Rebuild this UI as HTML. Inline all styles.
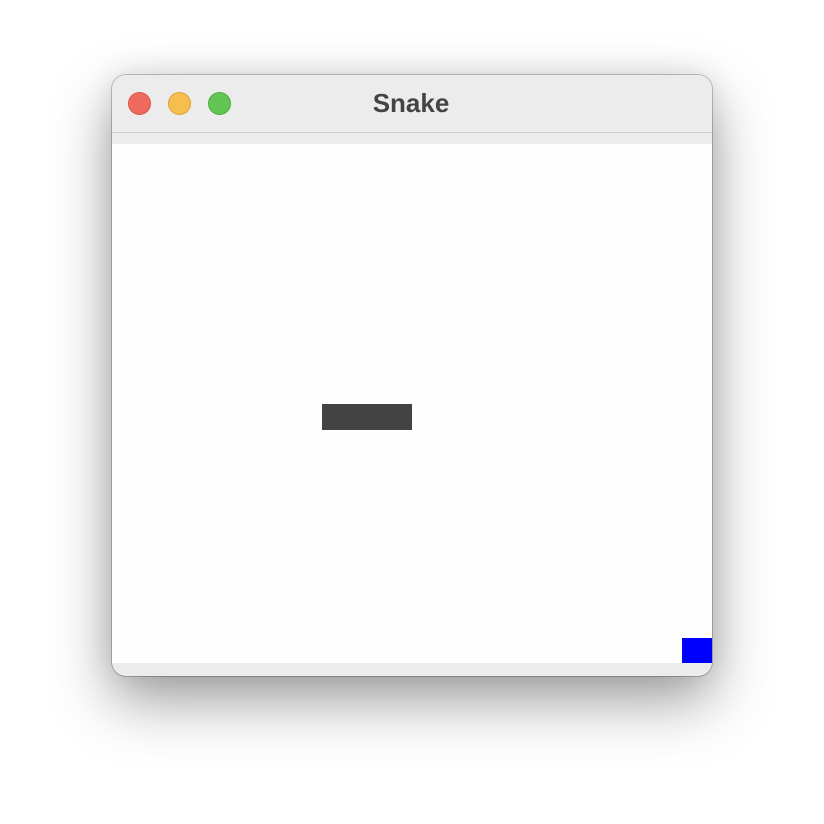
<!DOCTYPE html>
<html><head><meta charset="utf-8"><style>
html,body{margin:0;padding:0;width:824px;height:824px;background:#fff;overflow:hidden}
.win{position:absolute;left:112px;top:75px;width:600px;height:601px;border-radius:14px;background:#ececec;overflow:hidden;
box-shadow:0 0 0 1px rgba(0,0,0,0.22),0 25px 60px rgba(0,0,0,0.38),0 0 30px rgba(0,0,0,0.1)}
.tb{position:absolute;left:0;top:0;width:600px;height:57px;border-bottom:1px solid #d0d0d0;background:#ececec}
.c{position:absolute;top:17px;width:23px;height:23px;border-radius:50%;box-sizing:border-box}
.title{position:absolute;left:-1px;width:600px;top:13px;text-align:center;font:bold 26px "Liberation Sans",sans-serif;color:#444}
.content{position:absolute;left:0;top:69px;width:600px;height:519px;background:#fefefe}
</style></head><body>
<div class="win">
<div class="tb">
<div class="c" style="left:16px;background:#ee6a5e;border:1px solid #d85649"></div>
<div class="c" style="left:56px;background:#f6be4f;border:1px solid #dea236"></div>
<div class="c" style="left:96px;background:#62c554;border:1px solid #4fab3f"></div>
<div class="title">Snake</div>
</div>
<div class="content">
<div style="position:absolute;left:210px;top:260px;width:90px;height:26px;background:#434343"></div>
<div style="position:absolute;left:570px;top:494px;width:30px;height:25px;background:#0000ff"></div>
</div>
</div>
</body></html>
